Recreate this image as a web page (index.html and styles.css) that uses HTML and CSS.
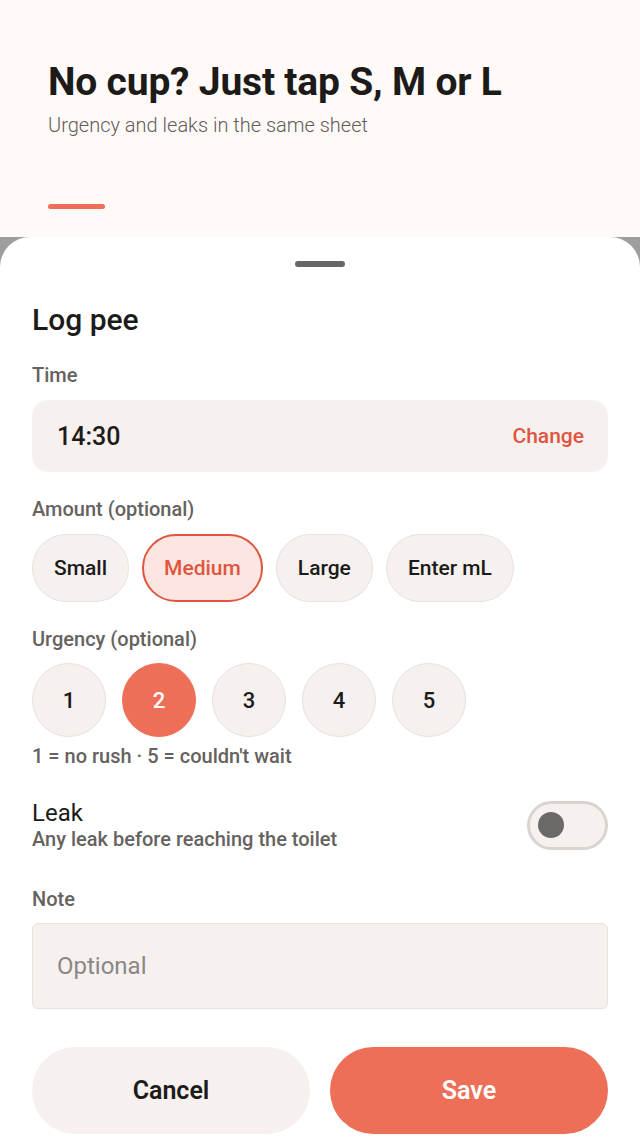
FILE: index.html
```html
<!DOCTYPE html>
<html lang="en">
<head>
    <meta charset="utf-8">
    <title>Log pee</title>
    <link rel="stylesheet" href="styles.css">
</head>
<body>
<div class="intro">
    <h1>No cup? Just tap S, M or L</h1>
    <p>Urgency and leaks in the same sheet</p>
    <div class="intro-bar"></div>
</div>

<div class="sheet">
    <div class="handle"></div>
    <h2>Log pee</h2>

    <div class="label">Time</div>
    <div class="time-field">
        <span class="time-value">14:30</span>
        <span class="time-change">Change</span>
    </div>

    <div class="label">Amount (optional)</div>
    <div class="chips">
        <button class="chip">Small</button>
        <button class="chip chip-on">Medium</button>
        <button class="chip">Large</button>
        <button class="chip">Enter mL</button>
    </div>

    <div class="label">Urgency (optional)</div>
    <div class="dots">
        <button class="dot">1</button>
        <button class="dot dot-on">2</button>
        <button class="dot">3</button>
        <button class="dot">4</button>
        <button class="dot">5</button>
    </div>
    <div class="hint">1 = no rush · 5 = couldn't wait</div>

    <div class="leak-row">
        <div>
            <div class="leak-title">Leak</div>
            <div class="leak-sub">Any leak before reaching the toilet</div>
        </div>
        <div class="switch"><span class="switch-thumb"></span></div>
    </div>

    <div class="label note-label">Note</div>
    <div class="note-field">Optional</div>

    <div class="actions">
        <button class="btn btn-cancel">Cancel</button>
        <button class="btn btn-save">Save</button>
    </div>
</div>
</body>
</html>
```

FILE: styles.css
```css
body {
    margin: 0;
    height: 1138px;
    overflow: hidden;
    background-color: #9e9e9e;
    font-family: Roboto, "Noto Sans", sans-serif;
    color: #1f1b19;
}

button {
    font-family: inherit;
    cursor: pointer;
}

.intro {
    background-color: #fffaf7;
    height: 237px;
    box-sizing: border-box;
    padding: 60px 48px 0;
}

.intro h1 {
    margin: 0;
    font-size: 39px;
    line-height: 44px;
    font-weight: 700;
    letter-spacing: -0.2px;
    color: #1c1b1a;
}

.intro p {
    margin: 8px 0 0;
    font-size: 20px;
    line-height: 26px;
    font-weight: 300;
    color: #5f5c5a;
}

.intro-bar {
    margin-top: 66px;
    width: 57px;
    height: 5px;
    border-radius: 3px;
    background-color: #ee6f58;
}

.sheet {
    background-color: white;
    border-radius: 30px 30px 0 0;
    padding: 24px 32px 0;
    height: 901px;
    box-sizing: border-box;
}

.handle {
    width: 50px;
    height: 6px;
    border-radius: 3px;
    background-color: #666;
    margin: 0 auto;
}

.sheet h2 {
    margin: 35px 0 0;
    font-size: 30px;
    line-height: 36px;
    font-weight: 500;
    color: #1c1b1a;
}

.label {
    margin-top: 25px;
    font-size: 20px;
    line-height: 24px;
    font-weight: 500;
    color: #656260;
}

.time-field {
    margin-top: 13px;
    height: 72px;
    border-radius: 16px;
    background-color: #f6f1ee;
    display: flex;
    align-items: center;
    justify-content: space-between;
    padding: 0 24px 0 25px;
}

.time-value {
    font-size: 25px;
    font-weight: 500;
}

.time-change {
    font-size: 21px;
    font-weight: 500;
    color: #e0553f;
}

.chips {
    margin-top: 13px;
    display: flex;
    gap: 13px;
}

.chip {
    height: 68px;
    padding: 0 21px;
    border-radius: 34px;
    border: 1px solid #e8e1dd;
    background-color: #f6f1ee;
    font-size: 21px;
    font-weight: 500;
    color: #1c1b1a;
}

.chip-on {
    border: 2px solid #e0553f;
    padding: 0 20px;
    background-color: #fde6e1;
    color: #e0553f;
}

.dots {
    margin-top: 12px;
    display: flex;
    gap: 16px;
}

.dot {
    width: 74px;
    height: 74px;
    border-radius: 50%;
    border: 1px solid #e8e1dd;
    background-color: #f6f1ee;
    font-size: 22px;
    font-weight: 500;
    color: #1c1b1a;
    padding: 0;
}

.dot-on {
    border-color: #ee6f58;
    background-color: #ee6f58;
    color: white;
}

.hint {
    margin-top: 7px;
    font-size: 20px;
    line-height: 24px;
    font-weight: 500;
    color: #656260;
}

.leak-row {
    margin-top: 31px;
    display: flex;
    justify-content: space-between;
    align-items: center;
}

.leak-title {
    font-size: 24px;
    line-height: 28px;
    color: #1c1b1a;
}

.leak-sub {
    font-size: 20px;
    line-height: 24px;
    font-weight: 500;
    color: #656260;
}

.switch {
    width: 81px;
    height: 49px;
    box-sizing: border-box;
    border: 3px solid #d9d4d0;
    border-radius: 25px;
    background-color: #f6f1ee;
    display: flex;
    align-items: center;
    padding-left: 8px;
}

.switch-thumb {
    width: 26px;
    height: 26px;
    border-radius: 50%;
    background-color: #6b6968;
}

.note-label {
    margin-top: 36px;
}

.note-field {
    margin-top: 12px;
    height: 86px;
    box-sizing: border-box;
    border: 1px solid #e8e1dd;
    border-radius: 6px;
    background-color: #f6f1ee;
    padding-left: 24px;
    display: flex;
    align-items: center;
    font-size: 24px;
    color: #8b8785;
}

.actions {
    margin-top: 38px;
    display: flex;
    gap: 20px;
}

.btn {
    flex: 1;
    height: 87px;
    border: none;
    border-radius: 44px;
    font-size: 25px;
    font-weight: 600;
}

.btn-cancel {
    background-color: #f6f1ee;
    color: #1c1b1a;
}

.btn-save {
    background-color: #ee6f58;
    color: white;
}
```
